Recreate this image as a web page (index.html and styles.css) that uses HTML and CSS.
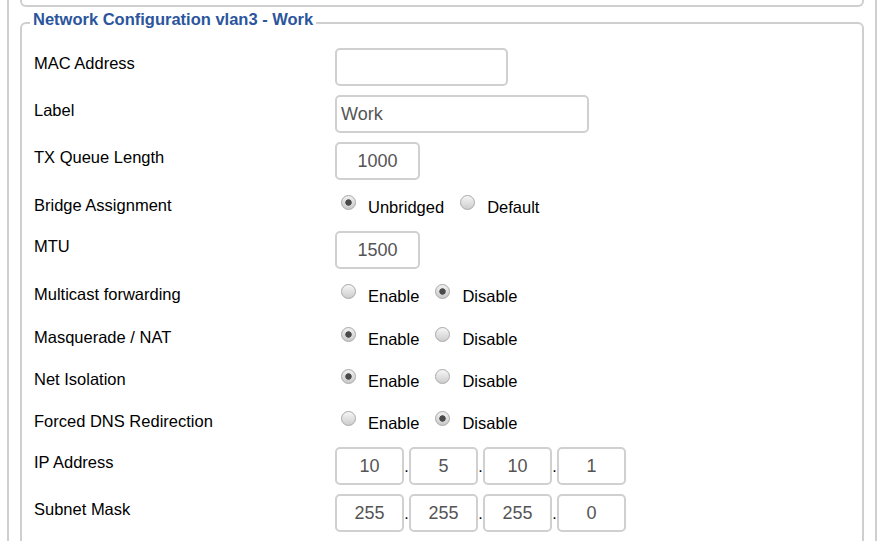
FILE: index.html
```html
<!doctype html>
<html>

<head>
    <title>Network Configuration</title>
    <link rel="stylesheet" href="styles.css">
</head>

<body>
    <div class="page">
        <div class="prev-section"></div>

        <fieldset class="section">
            <legend>Network Configuration vlan3 - Work</legend>
            <div class="rows">
                <div class="row">
                    <label>MAC Address</label>
                    <input type="text" class="w-mac" value="">
                </div>
                <div class="row">
                    <label>Label</label>
                    <input type="text" class="w-label" value="Work">
                </div>
                <div class="row">
                    <label>TX Queue Length</label>
                    <input type="text" class="w-num center" value="1000">
                </div>
                <div class="row radio-row">
                    <label>Bridge Assignment</label>
                    <span class="opt"><input type="radio" name="bridge" checked><span>Unbridged</span></span>
                    <span class="opt"><input type="radio" name="bridge"><span>Default</span></span>
                </div>
                <div class="row">
                    <label>MTU</label>
                    <input type="text" class="w-num center" value="1500">
                </div>
                <div class="row radio-row">
                    <label>Multicast forwarding</label>
                    <span class="opt"><input type="radio" name="mcast"><span>Enable</span></span>
                    <span class="opt"><input type="radio" name="mcast" checked><span>Disable</span></span>
                </div>
                <div class="row radio-row">
                    <label>Masquerade / NAT</label>
                    <span class="opt"><input type="radio" name="nat" checked><span>Enable</span></span>
                    <span class="opt"><input type="radio" name="nat"><span>Disable</span></span>
                </div>
                <div class="row radio-row">
                    <label>Net Isolation</label>
                    <span class="opt"><input type="radio" name="iso" checked><span>Enable</span></span>
                    <span class="opt"><input type="radio" name="iso"><span>Disable</span></span>
                </div>
                <div class="row radio-row">
                    <label>Forced DNS Redirection</label>
                    <span class="opt"><input type="radio" name="dns"><span>Enable</span></span>
                    <span class="opt"><input type="radio" name="dns" checked><span>Disable</span></span>
                </div>
                <div class="row">
                    <label>IP Address</label>
                    <div class="ip">
                        <input type="text" class="octet" value="10"><span class="dot">.</span>
                        <input type="text" class="octet" value="5"><span class="dot">.</span>
                        <input type="text" class="octet" value="10"><span class="dot">.</span>
                        <input type="text" class="octet" value="1">
                    </div>
                </div>
                <div class="row">
                    <label>Subnet Mask</label>
                    <div class="ip">
                        <input type="text" class="octet" value="255"><span class="dot">.</span>
                        <input type="text" class="octet" value="255"><span class="dot">.</span>
                        <input type="text" class="octet" value="255"><span class="dot">.</span>
                        <input type="text" class="octet" value="0">
                    </div>
                </div>
            </div>
        </fieldset>
    </div>
</body>

</html>
```

FILE: styles.css
```css
body,
html {
    margin: 0;
    padding: 0;
    background: #fff;
}

* {
    font-family: "Liberation Sans", Arial, sans-serif;
}

.page {
    margin-left: 7px;
    width: 866px;
    min-height: 541px;
    border-left: 2px solid #cfcfcf;
    border-right: 2px solid #cfcfcf;
}

.prev-section {
    margin: 0 11px;
    height: 5px;
    border: 2px solid #cfcfcf;
    border-top: none;
    border-radius: 0 0 6px 6px;
}

.section {
    margin: 3px 11px 0;
    padding: 0 0 0 12px;
    border: 2px solid #cfcfcf;
    border-radius: 6px;
    min-height: 560px;
}

.section legend {
    margin-left: -4px;
    padding: 0 3px 8px;
    font-size: 16.5px;
    line-height: 18px;
    font-weight: bold;
    color: #2b559c;
}

.rows {
    padding-top: 11px;
}

.row {
    display: flex;
    align-items: flex-start;
    height: 47px;
    font-size: 16.5px;
    color: #000;
}

.radio-row {
    height: 42.25px;
}

.row label {
    width: 301px;
    flex: none;
    padding-top: 6px;
    line-height: 20px;
}

.radio-row label {
    padding-top: 7px;
}

.row input[type=text] {
    box-sizing: border-box;
    height: 38px;
    margin: 1px 0 0;
    padding: 0 4px;
    border: 2px solid #d0d0d0;
    border-radius: 5px;
    font-size: 18px;
    color: #555;
    background: #fff;
    outline: none;
}

.w-mac {
    width: 173px;
}

.w-label {
    width: 254px;
}

.w-num {
    width: 85px;
}

.center,
.octet {
    text-align: center;
}

.ip {
    display: flex;
    align-items: baseline;
}

.row .ip input.octet {
    width: 69px;
}

.dot {
    width: 5px;
    text-align: center;
    font-size: 16px;
}

.opt {
    display: flex;
    align-items: flex-start;
    margin-right: 16px;
}

.opt span {
    padding-top: 9px;
    line-height: 20px;
}

.opt input[type=radio] {
    appearance: none;
    -webkit-appearance: none;
    box-sizing: border-box;
    width: 15px;
    height: 15px;
    margin: 7px 12px 0 6px;
    border: 1px solid #a8a8a8;
    border-radius: 50%;
    background: linear-gradient(#f6f6f6, #cdcdcd);
}

.opt input[type=radio]:checked {
    background: radial-gradient(circle, #4a4a4a 0, #4a4a4a 2.8px, transparent 3.6px),
        linear-gradient(#f0f0f0, #cacaca);
}

.opt + .opt input[type=radio] {
    margin-left: 0;
}
```
